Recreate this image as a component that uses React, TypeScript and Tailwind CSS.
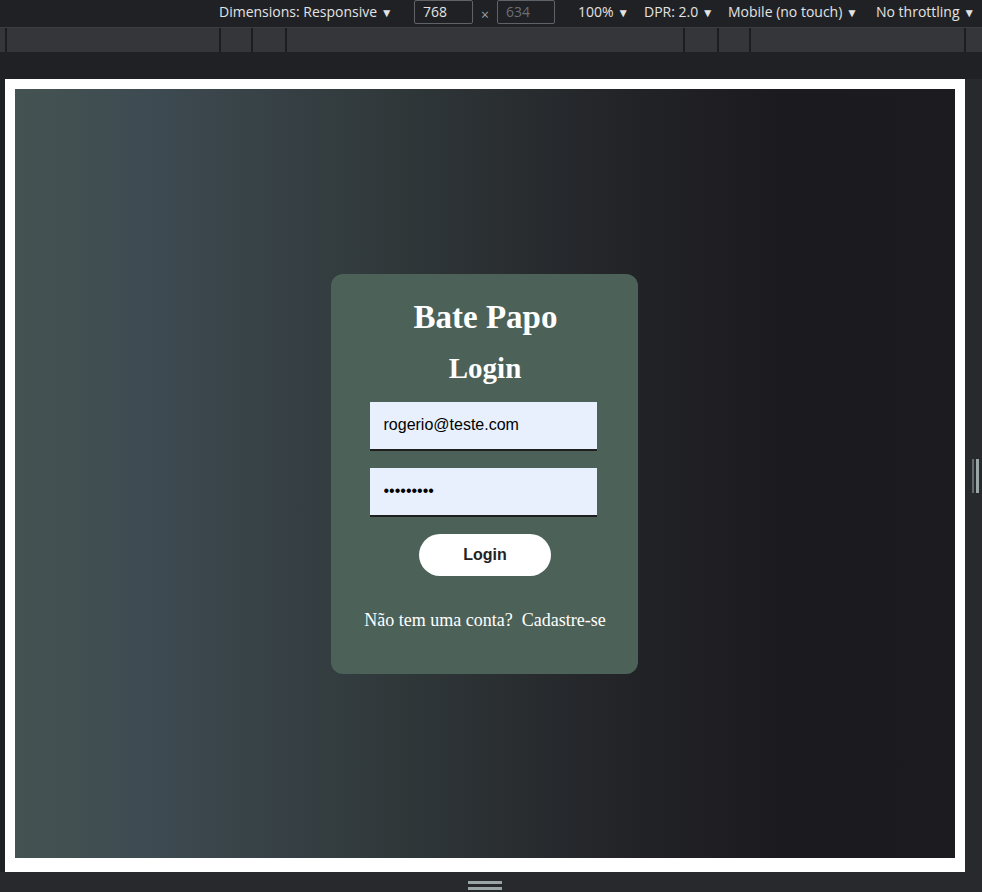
const Toolbar = () => {
    return (
        <div className="h-[28px] bg-[#202124] border-b border-[#3c3d40] flex items-start text-[14px] text-[#e3e3e3] font-['Open_Sans',sans-serif] whitespace-nowrap">
            <span className="ml-[219px] w-[195px] leading-[24px]">Dimensions: Responsive <span className="text-[12px]">▼</span></span>
            <div className="h-[24px] w-[59px] border border-[#5f6368] rounded-[2px] pl-[8px] text-[#e3e3e3] leading-[22px]">768</div>
            <span className="w-[24px] text-center text-[#9aa0a6] text-[14px] leading-[30px]">×</span>
            <div className="h-[24px] w-[58px] border border-[#5f6368] rounded-[2px] pl-[8px] text-[#6b6f74] leading-[22px]">634</div>
            <span className="ml-[23px] w-[66px] leading-[24px]">100% <span className="text-[12px]">▼</span></span>
            <span className="w-[84px] leading-[24px]">DPR: 2.0 <span className="text-[12px]">▼</span></span>
            <span className="w-[148px] leading-[24px]">Mobile (no touch) <span className="text-[12px]">▼</span></span>
            <span className="leading-[24px]">No throttling <span className="text-[12px]">▼</span></span>
        </div>
    )
}

const Ruler = () => {
    const cells = [7, 214, 32, 34, 398, 34, 32, 215]
    return (
        <div className="h-[24px] bg-[#35363a] flex">
            {cells.map((w, i) => (
                <div key={i} style={{ width: w }} className="h-full border-r-2 border-[#1d1d1f]" />
            ))}
        </div>
    )
}

const LoginCard = () => {
    return (
        <div className="w-[307px] h-[400px] mr-[2px] bg-[#4c6259] rounded-[12px] flex flex-col items-center pt-[24px] font-['Liberation_Serif',serif] text-white">
            <h1 className="ml-[3px] text-[33px] leading-[38px] font-bold">Bate Papo</h1>
            <h2 className="mt-[15px] ml-[2px] text-[29px] leading-[34px] font-bold">Login</h2>
            <input
                type="email"
                defaultValue="rogerio@teste.com"
                className="mt-[17px] mr-[2px] w-[227px] h-[49px] bg-[#e8f0fe] border-b-2 border-[#1f1f1f] pl-[14px] text-[16px] text-black font-['Liberation_Sans',sans-serif] outline-none"
            />
            <input
                type="password"
                defaultValue="123456789"
                className="mt-[17px] mr-[2px] w-[227px] h-[49px] bg-[#e8f0fe] border-b-2 border-[#1f1f1f] pl-[14px] text-[16px] text-black font-['Liberation_Sans',sans-serif] outline-none"
            />
            <button className="mt-[17px] ml-[2px] w-[132px] h-[42px] bg-white rounded-full text-[16px] font-bold text-[#222] font-['Liberation_Sans',sans-serif]">
                Login
            </button>
            <p className="mt-[34px] ml-[2px] text-[18px] leading-[21px]">
                Não tem uma conta?<span className="ml-[9px]">Cadastre-se</span>
            </p>
        </div>
    )
}

export default function App() {
    return (
        <main className="w-[982px] h-[892px] bg-[#202124] flex flex-col overflow-hidden">
            <Toolbar />
            <Ruler />
            <div className="h-[27px] bg-[#202124]" />
            <div className="flex">
                <div className="ml-[5px] w-[960px] h-[793px] bg-white pt-[10px] px-[10px] pb-[14px]">
                    <div className="w-full h-full flex items-center justify-center bg-[linear-gradient(to_right,#445351_0%,#3e4b52_14%,#30383a_40%,#222327_66%,#1b1a1f_82%,#1c1b20_100%)]">
                        <LoginCard />
                    </div>
                </div>
                <div className="flex-1 bg-[#28292c] flex items-center justify-center">
                    <div className="flex gap-[2px] ml-[4px]">
                        <div className="w-[2px] h-[34px] bg-[#5f6b6e]" />
                        <div className="w-[3px] h-[34px] bg-[#9aa5a6]" />
                    </div>
                </div>
            </div>
            <div className="flex-1 bg-[#28292c] flex flex-col items-center pt-[9px] pr-[12px] gap-[3px]">
                <div className="w-[34px] h-[3px] bg-[#9aa5a6]" />
                <div className="w-[34px] h-[3px] bg-[#9aa5a6]" />
            </div>
        </main>
    )
}
